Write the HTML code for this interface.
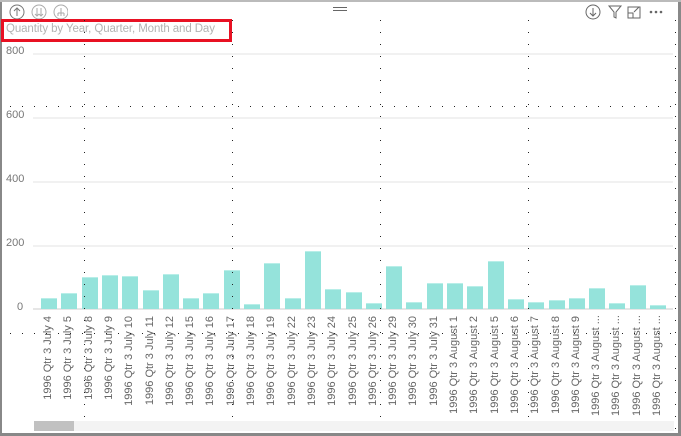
<!DOCTYPE html>
<html><head><style>
body{margin:0;width:681px;height:436px;overflow:hidden;background:#fff;font-family:"Liberation Sans",sans-serif;position:relative}
.a{position:absolute}
.g{position:absolute;left:33px;width:640px;height:2px;background:#f1f1f1}
.y{position:absolute;left:6px;font-size:11px;color:#777;width:20px}
.b{position:absolute;width:16px;background:#95e3db;border-top:1px solid #b8eee8}
.l{position:absolute;top:316px;font-size:11px;color:#666;white-space:nowrap;transform-origin:0 0;transform:rotate(-90deg);text-align:right;width:100px}
.vd{position:absolute;width:1px;top:20px;height:410px;background:repeating-linear-gradient(#222 0 1px,transparent 1px 12px)}
.hd{position:absolute;height:1px;left:10px;width:665px;background:repeating-linear-gradient(90deg,#222 0 1px,transparent 1px 12px)}
</style></head><body>
<div class="a" style="left:0;top:0;width:2px;height:436px;background:#888"></div>
<div class="a" style="left:0;top:433px;width:681px;height:3px;background:#888"></div>
<div class="a" style="left:678px;top:0;width:3px;height:436px;background:#888"></div>
<div class="a" style="left:0;top:0;width:681px;height:2px;background:#bbb"></div>
<div class="a" style="left:2px;top:2px;width:676px;height:18px;background:#fff"></div>
<svg class="a" style="left:8px;top:4px" width="60" height="16" viewBox="0 0 60 16" fill="none" stroke="#777" stroke-width="1">
<circle cx="9" cy="8" r="7"/><path d="M9 12V4M6 7l3-3 3 3"/>
<circle cx="31" cy="8" r="7" stroke="#aaa"/><path d="M29 4v8M33 4v8M27 10l2 2 2-2M31 10l2 2 2-2" stroke="#aaa"/>
<circle cx="53" cy="8" r="7" stroke="#aaa"/><path d="M53 4v5M50 9h6M50 9v3M53 9v3M56 9v3" stroke="#aaa"/>
</svg>
<div class="a" style="left:333px;top:7px;width:14px;height:1px;background:#666;box-shadow:0 3px 0 #666"></div>
<svg class="a" style="left:584px;top:4px" width="96" height="16" viewBox="0 0 96 16" fill="none" stroke="#666" stroke-width="1">
<circle cx="9" cy="8" r="7"/><path d="M9 4v8M6 9l3 3 3-3"/>
<path d="M25 2h12l-5 6v6l-2-1V8z"/>
<path d="M44 3h12v11H44zM44 9h5v5M50 8l5-5M52 3h4v4"/>
<circle cx="67" cy="8" r=".8" fill="#666"/><circle cx="72" cy="8" r=".8" fill="#666"/><circle cx="77" cy="8" r=".8" fill="#666"/>
</svg>
<div class="a" style="left:1px;top:19px;width:231px;height:23px;border:3px solid #e81123;box-sizing:border-box"></div>
<div class="a" style="left:6px;top:23px;font-size:11.5px;color:#b3b3b3;letter-spacing:-0.1px">Quantity by Year, Quarter, Month and Day</div>
<div class="g" style="top:53px"></div><div class="g" style="top:117px"></div><div class="g" style="top:181px"></div><div class="g" style="top:245px"></div><div class="g" style="top:308px;background:#e6e6e6"></div>
<div class="y" style="top:45px">800</div><div class="y" style="top:109px">600</div><div class="y" style="top:173px">400</div><div class="y" style="top:237px">200</div><div class="y" style="top:301px;left:17px">0</div>
<div id="c"></div>
<div class="vd" style="left:84px"></div><div class="vd" style="left:232px"></div><div class="vd" style="left:380px"></div><div class="vd" style="left:528px"></div><div class="vd" style="left:675px"></div>
<div class="hd" style="top:106px"></div><div class="hd" style="top:333px"></div>
<div class="a" style="left:34px;top:421px;width:640px;height:10px;background:#f3f3f3"></div>
<div class="a" style="left:34px;top:421px;width:40px;height:10px;background:#c1c1c1"></div>
<script>
var h=[10,16,33,35,34,19,36,10,16,40,4,47,10,60,20,17,5,44,6,26,26,23,49,9,6,8,11,21,5,24,3];
var n=["July 4","July 5","July 8","July 9","July 10","July 11","July 12","July 15","July 16","July 17","July 18","July 19","July 22","July 23","July 24","July 25","July 26","July 29","July 30","July 31","August 1","August 2","August 5","August 6","August 7","August 8","August 9","August ...","August ...","August ...","August ..."];
var s="";for(var i=0;i<31;i++){var cx=49+i*20.3;var hh=Math.round(h[i]*0.95);s+='<div class="b" style="left:'+(cx-8)+'px;top:'+(308-hh)+'px;height:'+hh+'px"></div>';
s+='<div class="l" style="left:'+(cx-7)+'px;top:416px">1996 Qtr 3 '+n[i]+'</div>';}
document.getElementById("c").innerHTML=s;
</script>
</body></html>
